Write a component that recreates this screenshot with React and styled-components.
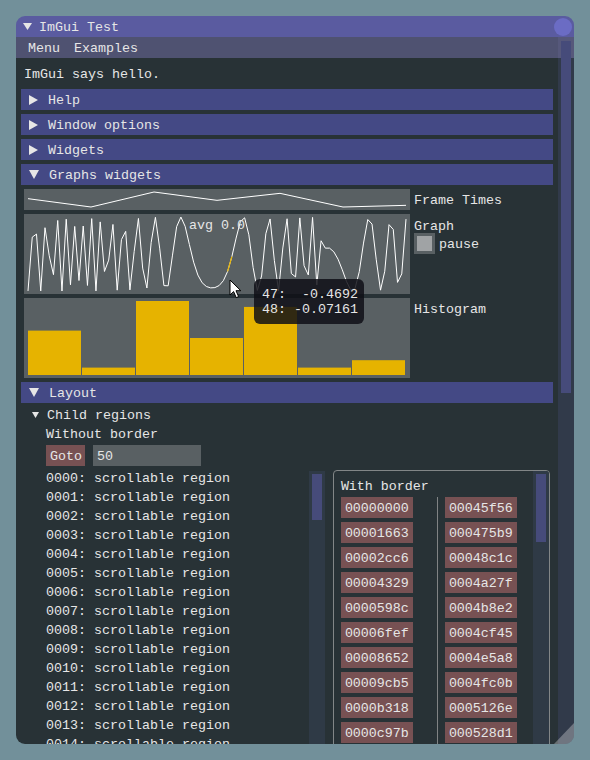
import React from 'react';
import styled, { createGlobalStyle } from 'styled-components';

const GlobalStyle = createGlobalStyle`
  html, body {
    margin: 0;
    padding: 0;
    background: #72909a;
  }
  body {
    font-family: "Liberation Mono", "Cousine", monospace;
    font-size: 13.333px;
    line-height: 17px;
    color: #e6e6e6;
  }
`;

const Stage = styled.div`
  padding: 16px;
  width: 590px;
  height: 760px;
  box-sizing: border-box;
`;

const Window = styled.div`
  position: relative;
  width: 558px;
  height: 728px;
  border-radius: 9px;
  overflow: hidden;
  display: flex;
  flex-direction: column;
`;

const TitleBar = styled.div`
  height: 21px;
  flex: none;
  background: #5a5ba0;
  display: flex;
  align-items: center;
  padding-left: 7px;
`;

// text inside a centred bar sits one pixel low, like imgui
const Label = styled.span`
  display: block;
  padding-top: 2px;
  white-space: pre;
  flex: ${p => (p.$grow ? 1 : 'none')};
  margin-left: ${p => p.$ml || 0}px;
`;

const CloseButton = styled.div`
  width: 18px;
  height: 18px;
  border-radius: 50%;
  background: #6b6cc4;
  margin-right: 2px;
`;

const Main = styled.div`
  flex: 1;
  min-height: 0;
  display: flex;
`;

const Column = styled.div`
  flex: 1;
  min-width: 0;
  display: flex;
  flex-direction: column;
`;

const MenuBar = styled.div`
  height: 21px;
  flex: none;
  background: #4f5271;
  display: flex;
  align-items: center;
  padding-left: 5px;
`;

const MenuItem = styled(Label)`
  padding-left: 7px;
  padding-right: 7px;
`;

const Body = styled.div`
  flex: 1;
  min-height: 0;
  background: #283236;
  padding: 8px 8px 0;
  display: flex;
  flex-direction: column;
  gap: 4px;
  overflow: hidden;
`;

// scrollbars: track + grab, sizes passed as props
const Track = styled.div`
  width: 16px;
  flex: none;
  background: ${p => p.$bg || '#2f3a46'};
  margin-top: ${p => p.$top || 0}px;
`;

const Grab = styled.div`
  margin: ${p => p.$top || 3}px 3px 0;
  height: ${p => p.$h}px;
  background: #464b7a;
`;

const Line = styled.div`
  height: 15px;
  white-space: pre;
  flex: none;
  margin-bottom: ${p => p.$after || 0}px;
`;

const Header = styled.div`
  height: 21px;
  flex: none;
  margin: 0 -3px;
  background: #444985;
  display: flex;
  align-items: center;
  padding-left: 8px;
  gap: 10px;
`;

const TriSvg = styled.svg`
  flex: none;
  fill: #e6e6e6;
  display: block;
`;

const Tri = ({ dir, w, h }) => {
  const pts = dir === 'down'
    ? `0,0 ${w},0 ${w / 2},${h}`
    : `0,0 ${w},${h / 2} 0,${h}`;
  return (
    <TriSvg width={w} height={h} viewBox={`0 0 ${w} ${h}`}>
      <polygon points={pts} />
    </TriSvg>
  );
};

const PlotRow = styled.div`
  display: flex;
  gap: 4px;
  flex: none;
`;

const PlotFrame = styled.div`
  width: 386px;
  height: ${p => p.$h}px;
  flex: none;
  background: #596063;
  display: grid;
  & > * {
    grid-area: 1 / 1;
  }
`;

const PlotOverlay = styled.div`
  justify-self: center;
  align-self: start;
  margin-top: 3px;
  white-space: pre;
`;

const PlotSide = styled.div`
  padding-top: ${p => p.$top || 3}px;
  display: flex;
  flex-direction: column;
`;

const CheckRow = styled.div`
  display: flex;
  align-items: center;
  gap: 4px;
`;

const CheckBox = styled.div`
  width: 21px;
  height: 21px;
  background: #596063;
  display: flex;
  align-items: center;
  justify-content: center;
`;

const CheckFill = styled.div`
  width: 15px;
  height: 15px;
  background: #a0a3a5;
`;

const TreeRow = styled.div`
  height: 15px;
  flex: none;
  display: flex;
  align-items: center;
  padding-left: 8px;
  gap: 8px;
`;

const TreeBody = styled.div`
  margin-left: 22px;
  display: flex;
  flex-direction: column;
  gap: 4px;
`;

const GotoRow = styled.div`
  display: flex;
  gap: 8px;
  height: 21px;
`;

const Button = styled.div`
  height: 21px;
  line-height: 23px;
  padding: 0 4px;
  width: ${p => (p.$w ? `${p.$w}px` : 'auto')};
  box-sizing: border-box;
  text-align: center;
  background: #775153;
  flex: none;
  overflow: hidden;
`;

const Input = styled.div`
  width: 108px;
  height: 21px;
  line-height: 23px;
  padding-left: 4px;
  box-sizing: border-box;
  background: #596063;
  overflow: hidden;
`;

const ChildRow = styled.div`
  display: flex;
  gap: 8px;
  height: 300px;
  flex: none;
  align-items: flex-start;
`;

const PlainChild = styled.div`
  width: 280px;
  height: 300px;
  display: flex;
`;

const ListCol = styled.div`
  flex: 1;
  display: flex;
  flex-direction: column;
  gap: 4px;
  overflow: hidden;
`;

const BorderChild = styled.div`
  width: 218px;
  height: 300px;
  box-sizing: border-box;
  border: 1px solid #828687;
  border-radius: 4px;
  display: flex;
  overflow: hidden;
`;

const BorderInner = styled.div`
  flex: 1;
  padding: 7px 0 0 7px;
  display: flex;
  flex-direction: column;
  gap: 4px;
`;

const Columns = styled.div`
  display: grid;
  grid-template-columns: 96px 1fr;
`;

const ColStack = styled.div`
  display: flex;
  flex-direction: column;
  gap: 4px;
  padding-left: ${p => (p.$sep ? 7 : 0)}px;
  border-left: ${p => (p.$sep ? '1px solid #808384' : 'none')};
  min-height: 260px;
`;

const ResizeGrip = styled.div`
  position: absolute;
  right: 0;
  bottom: 0;
  width: 20px;
  height: 21px;
  background: rgba(255, 255, 255, 0.3);
  clip-path: polygon(100% 0, 100% 100%, 0 100%);
`;

const Tooltip = styled.div`
  position: absolute;
  left: 238px;
  top: 263px;
  padding: 8px 6px 7px 8px;
  line-height: 15px;
  border-radius: 6px;
  background: rgba(14, 14, 22, 0.84);
  white-space: pre;
`;

const Cursor = styled.svg`
  position: absolute;
  left: 213px;
  top: 263px;
`;

const frameTimes = [0.6, 0.1, 1.0, 0.5, 0.92, 0.1, 0.2];

// rebuild the chirp buffer from the demo (ring offset 19)
const graphValues = (() => {
  const n = 90;
  const off = 19;
  const ph = new Array(n);
  const inc = i => 0.1 * ((off + i + 1) % n);
  ph[47] = -Math.acos(-0.4692);
  for (let i = 47; i < n - 1; i++) ph[i + 1] = ph[i] + inc(i);
  for (let i = 47; i > 0; i--) ph[i - 1] = ph[i] - inc(i - 1);
  return ph.map(Math.cos);
})();

const linePoints = (vals, min, max, h) =>
  vals
    .map((v, i) => {
      const x = 4 + (i / (vals.length - 1)) * 378;
      const y = 3 + (1 - (v - min) / (max - min)) * (h - 6);
      return `${x.toFixed(2)},${y.toFixed(2)}`;
    })
    .join(' ');

const FrameTimesPlot = () => (
  <svg width="386" height="21">
    <polyline points={linePoints(frameTimes, 0.1, 1.0, 21)} fill="none" stroke="#fff" strokeWidth="1" />
  </svg>
);

const GraphPlot = () => {
  const x0 = 4 + (47 / 89) * 378;
  const x1 = 4 + (48 / 89) * 378;
  const y = v => 3 + (1 - (v + 1) / 2) * 74;
  return (
    <svg width="386" height="80">
      <polyline points={linePoints(graphValues, -1, 1, 80)} fill="none" stroke="#fff" strokeWidth="1" />
      <line x1={x0} y1={y(graphValues[47])} x2={x1} y2={y(graphValues[48])} stroke="#e6b300" strokeWidth="1.2" />
    </svg>
  );
};

const HistogramPlot = () => (
  <svg width="386" height="80">
    {frameTimes.map((v, i) => (
      <rect key={i} x={4 + i * 54} y={3 + (1 - v) * 74} width="53" height={v * 74} fill="#e6b300" />
    ))}
  </svg>
);

const leftIds = Array.from({ length: 10 }, (_, i) => (i * 5731).toString(16).padStart(8, '0'));
const rightIds = Array.from({ length: 10 }, (_, i) => ((i + 50) * 5731).toString(16).padStart(8, '0'));

const App = () => {
  return (
    <Stage>
      <GlobalStyle />
      <Window>
        <TitleBar>
          <Tri dir="down" w={9} h={7} />
          <Label $grow $ml={7}>ImGui Test</Label>
          <CloseButton />
        </TitleBar>
        <Main>
          <Column>
            <MenuBar>
              <MenuItem>Menu</MenuItem>
              <MenuItem>Examples</MenuItem>
            </MenuBar>
            <Body>
              <Line $after={4}>ImGui says hello.</Line>
              {['Help', 'Window options', 'Widgets'].map(t => (
                <Header key={t}>
                  <Tri dir="right" w={9} h={10} />
                  <Label>{t}</Label>
                </Header>
              ))}
              <Header>
                <Tri dir="down" w={10} h={9} />
                <Label>Graphs widgets</Label>
              </Header>

              <PlotRow>
                <PlotFrame $h={21}>
                  <FrameTimesPlot />
                </PlotFrame>
                <PlotSide>Frame Times</PlotSide>
              </PlotRow>
              <PlotRow>
                <PlotFrame $h={80}>
                  <GraphPlot />
                  <PlotOverlay>avg 0.0</PlotOverlay>
                </PlotFrame>
                <PlotSide $top={4}>
                  <Line>Graph</Line>
                  <CheckRow>
                    <CheckBox>
                      <CheckFill />
                    </CheckBox>
                    <Label>pause</Label>
                  </CheckRow>
                </PlotSide>
              </PlotRow>
              <PlotRow>
                <PlotFrame $h={80}>
                  <HistogramPlot />
                </PlotFrame>
                <PlotSide>Histogram</PlotSide>
              </PlotRow>

              <Header>
                <Tri dir="down" w={10} h={9} />
                <Label>Layout</Label>
              </Header>
              <TreeRow>
                <Tri dir="down" w={7} h={6} />
                <Label>Child regions</Label>
              </TreeRow>
              <TreeBody>
                <Line>Without border</Line>
                <GotoRow>
                  <Button $w={39}>Goto</Button>
                  <Input>50</Input>
                </GotoRow>
                <ChildRow>
                  <PlainChild>
                    <ListCol>
                      {Array.from({ length: 15 }, (_, i) => (
                        <Line key={i}>{`${String(i).padStart(4, '0')}: scrollable region`}</Line>
                      ))}
                    </ListCol>
                    <Track $top={1}>
                      <Grab $h={46} />
                    </Track>
                  </PlainChild>
                  <BorderChild>
                    <BorderInner>
                      <Line>With border</Line>
                      <Columns>
                        <ColStack>
                          {leftIds.map(id => (
                            <Button key={id} $w={72}>{id}</Button>
                          ))}
                        </ColStack>
                        <ColStack $sep>
                          {rightIds.map(id => (
                            <Button key={id} $w={72}>{id}</Button>
                          ))}
                        </ColStack>
                      </Columns>
                    </BorderInner>
                    <Track>
                      <Grab $h={68} />
                    </Track>
                  </BorderChild>
                </ChildRow>
              </TreeBody>
            </Body>
          </Column>
          <Track $bg="linear-gradient(to bottom, #56587b 0 21px, #313a4a 21px)">
            <Grab $h={352} $top={4} />
          </Track>
        </Main>
        <ResizeGrip />
        <Tooltip>{'47:  -0.4692\n48: -0.07161'}</Tooltip>
        <Cursor width="14" height="20" viewBox="0 0 14 20">
          <path d="M1 1 L1 16 L4.6 12.6 L7.2 18.6 L9.6 17.6 L7 11.7 L11.8 11.7 Z" fill="#fff" stroke="#000" strokeWidth="1" strokeLinejoin="round" />
        </Cursor>
      </Window>
    </Stage>
  );
};

export default App;
